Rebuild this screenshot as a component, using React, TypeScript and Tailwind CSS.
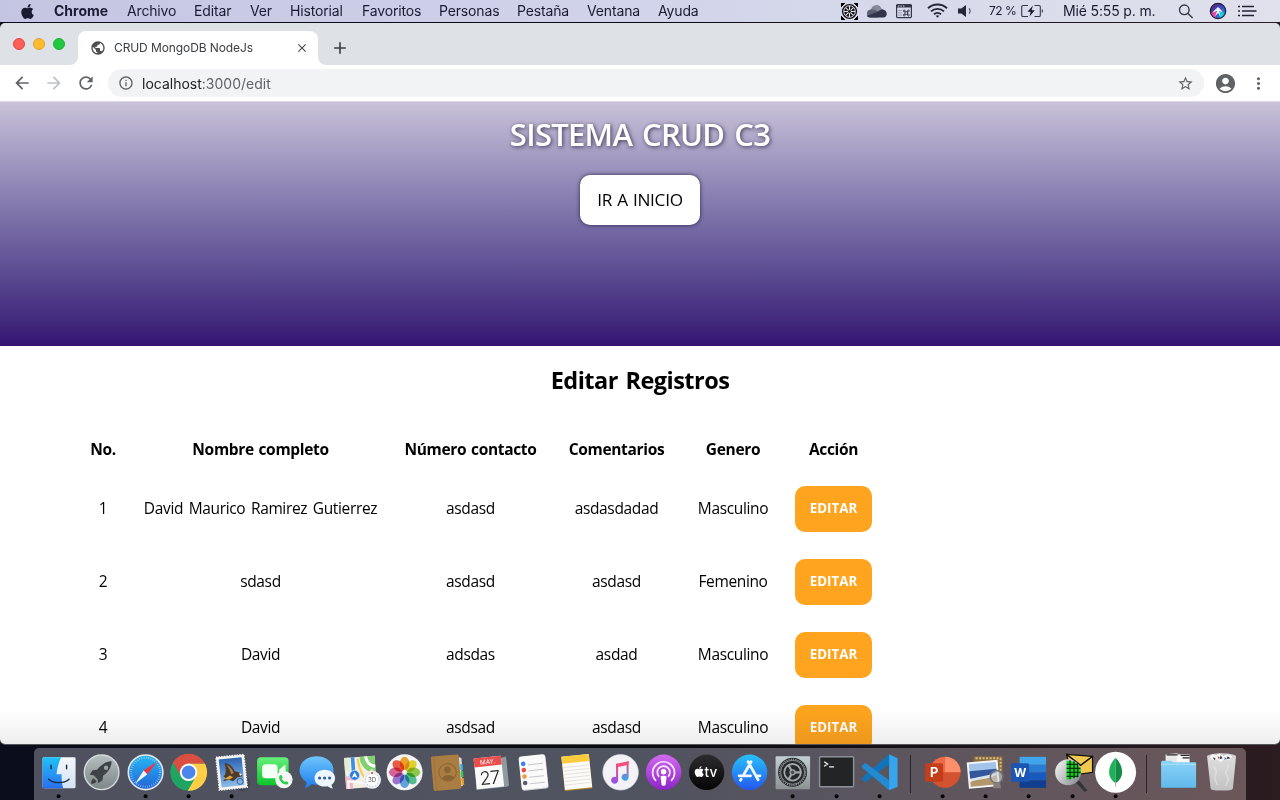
import React from "react";
import { FaApple } from "react-icons/fa";
import {
  MdAccountCircle,
  MdAdd,
  MdArrowBack,
  MdArrowForward,
  MdClose,
  MdInfoOutline,
  MdMoreVert,
  MdPublic,
  MdRefresh,
  MdStarBorder,
} from "react-icons/md";

const MENUS: [string, string][] = [
  ["Archivo", "w-[67px]"],
  ["Editar", "w-[56px]"],
  ["Ver", "w-[40px]"],
  ["Historial", "w-[72px]"],
  ["Favoritos", "w-[77px]"],
  ["Personas", "w-[78px]"],
  ["Pestaña", "w-[70px]"],
  ["Ventana", "w-[71px]"],
  ["Ayuda", "w-[50px]"],
];

const ROWS = [
  ["1", "David Maurico Ramirez Gutierrez", "asdasd", "asdasdadad", "Masculino"],
  ["2", "sdasd", "asdasd", "asdasd", "Femenino"],
  ["3", "David", "adsdas", "asdad", "Masculino"],
  ["4", "David", "asdsad", "asdasd", "Masculino"],
];

function MenuBar() {
  return (
    <header className="flex h-[22px] shrink-0 items-center bg-linear-to-r from-[#c4c5e2] via-[#d1d4ea] to-[#e0e1ec] font-['Inter',sans-serif] text-[14px] leading-[22px] tracking-[-0.15px] whitespace-nowrap text-[#1a1b30]">
      <FaApple className="ml-[19px] size-[17px] shrink-0" />
      <span className="ml-[18px] w-[73px] shrink-0 font-bold tracking-normal">Chrome</span>
      {MENUS.map(([name, width]) => (
        <span key={name} className={`shrink-0 ${width}`}>
          {name}
        </span>
      ))}
      <svg className="ml-[133px] size-[17px] shrink-0" viewBox="0 0 17 17">
        <path d="M0 0h4l-4 4zM17 0v4l-4-4zM0 17v-4l4 4zM17 17h-4l4-4z" fill="#000" stroke="#000" />
        <circle cx="8.5" cy="8.5" r="7.6" fill="#111" />
        <circle cx="8.5" cy="8.5" r="5.8" fill="none" stroke="#d8dae8" strokeWidth="1" />
        <path d="M8.5 3v11M3 8.5h11M4.6 4.6l7.8 7.8M12.4 4.6l-7.8 7.8" stroke="#e8e8f0" strokeWidth="1.1" />
        <circle cx="8.5" cy="8.5" r="1.4" fill="#111" />
      </svg>
      <svg className="ml-[8px] h-[14px] w-[21px] shrink-0" viewBox="0 0 21 14">
        <path d="M5 6a5.4 5.4 0 0 1 10.4-1.5L18 6l-6 5z" fill="#85889b" />
        <path d="M4.5 5.5C6 5 8 5.2 9.2 6.1L16 10l-4 3.4H4.2A4 4 0 0 1 4.5 5.5z" fill="#5d6072" />
        <path d="M10 8.6l4-2.4c3-1.6 6.8.3 6.8 3.6 0 2.3-1.600 3.700-3.500 3.700H4.200c-1.500 0-2.800-.8-3.400-1.800z" fill="#31334a" />
      </svg>
      <svg className="ml-[9px] size-[16px] shrink-0" viewBox="0 0 16 16">
        <rect x=".6" y="1.600" width="14.800" height="13" rx="1" fill="none" stroke="#34374b" strokeWidth="1.200" />
        <path d="M.5 3.200h15" stroke="#34374b" strokeWidth="2.600" />
        <path d="M2 3h1.300M4.500 3h1.300M7 3h1.300" stroke="#e0e2ee" />
        <path d="M3 7v6M5 7v6" stroke="#666a80" strokeDasharray="1 1.300" />
        <g fill="none" stroke="#34374b" strokeWidth=".9">
          <rect x="9" y="8.700" width="2.600" height="2.600" />
          <circle cx="8.200" cy="7.900" r=".9" />
          <circle cx="12.400" cy="7.900" r=".9" />
          <circle cx="8.200" cy="12.100" r=".9" />
          <circle cx="12.400" cy="12.100" r=".9" />
        </g>
      </svg>
      <svg className="ml-[15px] h-[16px] w-[21px] shrink-0" viewBox="0 0 21 16" fill="none" stroke="#24263b" strokeWidth="1.900">
        <path d="M1 5.300c5.400-5 13.600-5 19 0M4 8.400c3.700-3.400 9.300-3.400 13 0M7 11.300c2-1.900 5-1.900 7 0" />
        <path d="M8.700 12.800c1-.8 2.600-.8 3.600 0l-1.800 2z" fill="#24263b" stroke="none" />
      </svg>
      <svg className="ml-[10px] h-[14px] w-[14px] shrink-0" viewBox="0 0 14 14">
        <path d="M0 4.500h3.300L8 1v12L3.300 9.500H0z" fill="#24263b" />
        <path d="M11 4.300c1.300 1.500 1.300 3.900 0 5.400" fill="none" stroke="#5a5d70" strokeWidth="1.200" />
      </svg>
      <span className="ml-[17px] w-[32px] shrink-0 text-[12px] tracking-[-0.5px]">72 %</span>
      <svg className="h-[14px] w-[23px] shrink-0" viewBox="0 0 23 14">
        <path d="M7 1.500H2A1.300 1.300 0 0 0 .7 2.800v8.400A1.300 1.300 0 0 0 2 12.500h5M13.500 1.500H18a1.300 1.300 0 0 1 1.300 1.300v8.400a1.300 1.300 0 0 1-1.300 1.300h-4.500" fill="none" stroke="#34374b" strokeWidth="1.100" />
        <path d="M20.800 5c1.600.6 1.600 3.400 0 4z" fill="#34374b" />
        <path d="M12 1.500L6.500 7.800h3.200L8.500 12.500 13.800 6.200h-3.300z" fill="#15172a" />
      </svg>
      <span className="ml-[19px] w-[115px] shrink-0">Mié 5:55 p. m.</span>
      <svg className="size-[16px] shrink-0" viewBox="0 0 16 16" fill="none" stroke="#34374b" strokeWidth="1.400">
        <circle cx="6.300" cy="6.800" r="4.800" />
        <path d="M10 10.500l4.600 4.600" />
      </svg>
      <svg className="ml-[15px] size-[18px] shrink-0" viewBox="0 0 18 18">
        <defs>
          <linearGradient id="siri" x1="0" y1="0" x2="1" y2="1">
            <stop offset="0" stopColor="#5b1f63" />
            <stop offset=".5" stopColor="#3d46c8" />
            <stop offset="1" stopColor="#18b6d8" />
          </linearGradient>
        </defs>
        <circle cx="9" cy="9" r="7.700" fill="url(#siri)" stroke="#1f2038" strokeWidth="1.200" />
        <path d="M8 10C5 8.500 3 9.500 2.500 11.500 3.500 14 5 15 6.500 15.500z" fill="#e3479b" />
        <path d="M9.500 9.500C12 8 14.500 9.500 15 12c-1 2-2.500 3-4 3.600z" fill="#25c5df" />
        <path d="M9 5c1.500 1.500 3.500 2.500 4.500 5L10 9l1.500 5.500L9 11l-3 3.500L8 9l-4 1.500C5 8 7.500 7 9 5z" fill="#eaf2ff" />
      </svg>
      <svg className="ml-[11px] h-[12px] w-[19px] shrink-0" viewBox="0 0 19 12" stroke="#202236" strokeWidth="1.600">
        <path d="M0 1.500h2M0 6h2M0 10.500h2M4 1.500h12M4 6h14.500M4 10.500h12" />
      </svg>
    </header>
  );
}

function BrowserChrome() {
  return (
    <>
      <div className="flex h-[42px] shrink-0 bg-[#dee1e6]">
        <div className="flex w-[70px] items-start gap-[8px] pt-[15px] pl-[13px]">
          <span className="size-[12px] rounded-full border border-[#e2463f] bg-[#fe5f57]" />
          <span className="size-[12px] rounded-full border border-[#e1a12d] bg-[#febc2e]" />
          <span className="size-[12px] rounded-full border border-[#1fae35] bg-[#20c93f]" />
        </div>
        <div className="flex items-end">
          <svg className="size-[8px]" viewBox="0 0 8 8">
            <path d="M8 0v8H0a8 8 0 0 0 8-8z" fill="#fff" />
          </svg>
          <div className="flex h-[34px] w-[240px] items-center rounded-t-[8px] bg-white pl-[12px]">
            <MdPublic className="size-[16px] text-[#4b4e52]" />
            <span className="ml-[8px] w-[178px] font-['Inter',sans-serif] text-[12px] tracking-[-0.1px] text-[#3c4043]">
              CRUD MongoDB NodeJs
            </span>
            <MdClose className="ml-[3px] size-[14px] text-[#4b4e52]" />
          </div>
          <svg className="size-[8px]" viewBox="0 0 8 8">
            <path d="M0 0v8h8a8 8 0 0 1-8-8z" fill="#fff" />
          </svg>
        </div>
        <MdAdd className="mt-[15px] ml-[4px] size-[20px] text-[#3c4043]" />
      </div>
      <div className="flex h-[37px] shrink-0 items-center border-b border-[#dcdae2] bg-white text-[#5f6368]">
        <MdArrowBack className="ml-[12px] size-[20px]" />
        <MdArrowForward className="ml-[12px] size-[20px] text-[#bdc1c6]" />
        <MdRefresh className="ml-[12px] size-[20px]" />
        <div className="ml-[12px] flex h-[28px] w-[1096px] items-center rounded-full bg-[#f1f3f4] pr-[10px] pl-[10px]">
          <MdInfoOutline className="size-[16px]" />
          <span className="ml-[8px] flex-1 font-['Inter',sans-serif] text-[14px]">
            <span className="text-[#202124]">localhost</span>:3000/edit
          </span>
          <MdStarBorder className="size-[17px]" />
        </div>
        <MdAccountCircle className="ml-[10px] size-[23px]" />
        <MdMoreVert className="ml-[12px] size-[19px]" />
      </div>
    </>
  );
}

function Page() {
  return (
    <main className="flex min-h-0 flex-1 flex-col overflow-hidden bg-white font-['Open_Sans',sans-serif]">
      <section className="flex h-[244px] shrink-0 flex-col items-center bg-linear-to-b from-[#c9c2d8] to-[#351471]">
        <h1 className="mt-[11px] h-[42px] text-[31px] leading-[42px] font-[620] tracking-[-0.720px] text-white [text-shadow:1px_1px_4px_#3c3350] [word-spacing:2.500px]">
          SISTEMA CRUD C3
        </h1>
        <button className="mt-[20px] h-[50px] w-[120px] rounded-[10px] bg-white text-[17.200px] font-[450] tracking-[-0.3px] text-black shadow-[0_0_4px_rgba(20,10,40,0.75)] [word-spacing:1px]">
          IR A INICIO
        </button>
      </section>
      <h2 className="mt-[18px] h-[32px] shrink-0 text-center text-[23.500px] leading-[32px] font-[680] tracking-[-0.520px] text-black [word-spacing:2px]">
        Editar Registros
      </h2>
      <div className="mt-[40px] ml-[91px] grid shrink-0 grid-cols-[24px_237px_129px_109px_70px_77px] gap-x-[27px] text-center text-[15.500px] whitespace-nowrap text-black">
        {["No.", "Nombre completo", "Número contacto", "Comentarios", "Genero", "Acción"].map((h) => (
          <div key={h} className="flex h-[36px] items-start justify-center leading-[26px] font-[670] tracking-[-0.330px] [word-spacing:1px]">
            {h}
          </div>
        ))}
        {ROWS.map((row) => (
          <React.Fragment key={row[0]}>
            {row.map((cell, i) => (
              <div key={i} className="flex h-[73px] items-center justify-center font-[440] tracking-[-0.360px] [word-spacing:2px]">
                {cell}
              </div>
            ))}
            <div className="flex h-[73px] items-center">
              <button className="h-[46px] w-[77px] rounded-[10px] bg-[#fea41e] text-[13.300px] font-bold text-white">
                EDITAR
              </button>
            </div>
          </React.Fragment>
        ))}
      </div>
    </main>
  );
}

type DockItem = { name: string; running?: boolean; art: React.ReactNode };

const uiFont = "Inter, sans-serif";

function Gradient({ id, from, to, x2 = 0, y2 = 1 }: { id: string; from: string; to: string; x2?: number; y2?: number }) {
  return (
    <linearGradient id={id} x1="0" y1="0" x2={x2} y2={y2}>
      <stop offset="0" stopColor={from} />
      <stop offset="1" stopColor={to} />
    </linearGradient>
  );
}

const APPS: DockItem[] = [
  {
    name: "Finder",
    running: true,
    art: (
      <>
        <Gradient id="finderL" from="#1fc3f7" to="#2a6ff2" />
        <Gradient id="finderR" from="#f4f7fb" to="#d4e3f5" />
        <rect x="-16" y="-15" width="33" height="31" rx="1.500" fill="url(#finderR)" />
        <path d="M-14.500-15H2.500C0-9-1.500-4-2 2h5c0 5 .3 9 1.500 14h-19A1.500 1.500 0 0 1-16 14.500v-28A1.500 1.500 0 0 1-14.500-15z" fill="url(#finderL)" />
        <path d="M-7.500-7v3.500M8-7v3.500M-10 7C-5 11.500 5.500 11.500 10.500 7" fill="none" stroke="#16283c" strokeWidth="1.400" strokeLinecap="round" />
      </>
    ),
  },
  {
    name: "Launchpad",
    art: (
      <>
        <Gradient id="launch" from="#b5bfbf" to="#7d8688" />
        <circle r="17.300" fill="url(#launch)" stroke="#d5dadb" strokeWidth="1.400" />
        <path d="M10-11C4-11-1-7-4.500-2.500L-9-2l-3 4.500 4 .5 4 4L-3.500 11 1 8l.5-4.500C6.500 0 10-5 10-11z" fill="#3d4347" />
        <circle cx="4.500" cy="-4.500" r="2.200" fill="#9aa3a5" />
        <path d="M-8 6c-2 1-2.500 3-2.500 5.500C-8 11.500-6 11-5 9z" fill="#3d4347" />
      </>
    ),
  },
  {
    name: "Safari",
    running: true,
    art: (
      <>
        <Gradient id="safari" from="#27b8f2" to="#2262d8" />
        <circle r="17.300" fill="url(#safari)" stroke="#e4e7ec" strokeWidth="1.600" />
        <circle r="14.500" fill="none" stroke="#a9dcf8" strokeWidth="2" strokeDasharray=".6 1.678" />
        <path d="M11.500-10.500L1.800 2-2-1.800z" fill="#f0363c" />
        <path d="M-10.500 11.500L-2-1.800 1.800 2z" fill="#f3f3f3" />
      </>
    ),
  },
  {
    name: "Chrome",
    running: true,
    art: (
      <>
        <clipPath id="chromeClip">
          <circle r="18.500" />
        </clipPath>
        <g clipPath="url(#chromeClip)">
          <circle r="18.500" fill="#1fa463" />
          <path d="M0-8.500H30V-30H-30L-27.500-30.300-7.400 4.200 0 0z" fill="#dc4e41" />
          <path d="M0-8.500H30V30L-12.500 39 7.400 4.200 0 0z" fill="#ffce44" />
        </g>
        <circle r="8.700" fill="#fff" />
        <circle r="6.800" fill="#4a86ee" />
      </>
    ),
  },
  {
    name: "Mail",
    running: true,
    art: (
      <>
        <Gradient id="mail" from="#2d64b2" to="#8cbce8" />
        <circle cx="11" cy="11" r="7" fill="#474a58" stroke="#3d404d" />
        <g transform="rotate(-6)">
          <rect x="-14" y="-16.500" width="28" height="33" fill="#f4f4f2" stroke="#f4f4f2" strokeWidth="1.500" strokeDasharray="1.500 1.100" />
          <rect x="-11.500" y="-14" width="23" height="28" fill="url(#mail)" />
          <path d="M-6-10C-1-9 2-5 3-1l5 2 2.500 4-5 .5-5 3.500-4-2-6 1 3-3-2-2c3-1 3.500-7 2.500-13z" fill="#4f3a28" />
          <path d="M-4.500-8C-1-6 1.500-2 2 1l-2.500 1C-1-2-2.500-5-4.500-8z" fill="#a5825a" />
          <path d="M-8 6l6-3 3 2-4 2z" fill="#d8a83c" />
          <path d="M7.500 1.500l2.500 1.500-2 1.500z" fill="#fff" />
          <circle cx="7.500" cy="10" r="3" fill="none" stroke="#31517f" strokeWidth=".8" />
        </g>
      </>
    ),
  },
  {
    name: "FaceTime",
    art: (
      <>
        <Gradient id="facetime" from="#66f07a" to="#0ac42c" />
        <rect x="-17.500" y="-15" width="31.500" height="28" rx="4" fill="url(#facetime)" />
        <rect x="-12.500" y="-8" width="15.500" height="14" rx="3.500" fill="#f4fff5" />
        <path d="M4.500-2.500L9.500-7c.7-.6 1.500-.2 1.500.6V6L4.500 1.500z" fill="#e9fbea" />
        <circle cx="9.300" cy="7.300" r="8.700" fill="#f4f5f4" />
        <path d="M5 3.500c1-1.300 2-1 2.600.3.500 1 .5 1.500-.4 2.200.5 1.700 1.700 3 3.300 3.600.8-1 1.400-.9 2.300-.2 1.200.8 1.400 1.600.3 2.500C9.500 14 2.700 7.500 5 3.500z" fill="#2ccf4a" />
      </>
    ),
  },
  {
    name: "Messages",
    art: (
      <>
        <Gradient id="msg" from="#6ec5fb" to="#1d7df0" />
        <path d="M-1-16c9.500 0 17 6 17 14S8.500 12.500-1 12.500c-2 0-3.500-.2-5-.7-2 2.200-4 3.700-7 4 1.500-2 2-3.500 2-6C-15.500 7-18 2.500-18-2c0-8 7.500-14 17-14z" fill="url(#msg)" />
        <path d="M7-2.500c6.500 0 10.500 4 10.500 8.500 0 3-1.500 5-3.500 6.500 0 1.500.5 2.500 1.500 3.700-2 0-4-1-5.500-2.200-7 1.300-13-2-13-8 0-4.500 4-8.500 10-8.500z" fill="#edf5fd" />
        <g fill="#2a5fa8">
          <circle cx="2" cy="5.700" r="1.600" />
          <circle cx="7" cy="5.700" r="1.600" />
          <circle cx="12" cy="5.700" r="1.600" />
        </g>
      </>
    ),
  },
  {
    name: "Maps",
    art: (
      <>
        <g transform="rotate(-4)">
          <rect x="-16.500" y="-15.500" width="30.500" height="31" fill="#f3efe4" />
          <path d="M-1-15.500h15V2C5 0-1-6-1-15.500z" fill="#7fd070" />
          <path d="M5-15.500C6-9 9-6 14-5" fill="none" stroke="#fff" strokeWidth="3" />
          <path d="M-16.500-15.500h5V-2h-5z" fill="#dfeed5" />
          <path d="M-16.500 3h7v12.500h-7z" fill="#f2b9c4" />
          <path d="M-14 15.500V8L14 13" fill="none" stroke="#fff" strokeWidth="2" />
          <path d="M0 9l10-12 4 4v7z" fill="#cfe9b8" />
          <path d="M-8-15.500V3" stroke="#3a8ee8" strokeWidth="3.600" />
          <path d="M-3-14C-2 0 2 8 12 14" fill="none" stroke="#f7ce4c" strokeWidth="2" />
        </g>
        <circle cx="-7" cy="3" r="5" fill="#2c7be0" stroke="#d7e6f8" strokeWidth=".8" />
        <path d="M-7-.3l3 6-3-1.400-3 1.400z" fill="#fff" />
        <circle cx="10.500" cy="7.500" r="9" fill="#eef0f2" />
        <circle cx="10.500" cy="7.500" r="6.600" fill="#fff" stroke="#8aa" strokeWidth=".8" strokeDasharray="1 2" />
        <text x="10.500" y="9.800" textAnchor="middle" fontSize="6.200" fontFamily={uiFont} fill="#555">3D</text>
        <circle cx="10.500" cy="0.800" r="1" fill="#e33" />
      </>
    ),
  },
  {
    name: "Photos",
    art: (
      <>
        <circle r="18" fill="#f4f4f6" />
        {["#f7a11b", "#e8d81c", "#8ecb3c", "#47bf8a", "#5a9fe0", "#9a6ccf", "#dd5b94", "#f0503a"].map((color, i) => (
          <ellipse key={color} cy="-8.900" rx="4.800" ry="6.700" fill={color} opacity=".92" transform={`rotate(${i * 45})`} className="mix-blend-multiply" />
        ))}
      </>
    ),
  },
  {
    name: "Contacts",
    art: (
      <g transform="rotate(-5)">
        <path d="M11-14h3v29h-3z" fill="#ddd" />
        <path d="M13-13h2v6h-2z" fill="#ddd" />
        <path d="M13-7h2.500v6H13z" fill="#3fb5e8" />
        <path d="M13 0h2.500v6H13z" fill="#3cc44e" />
        <path d="M13 7h2.500v7H13z" fill="#f09a28" />
        <rect x="-15.500" y="-17" width="28" height="34.500" rx="1.500" fill="#aa7d42" />
        <path d="M-12.500-17v34.500" stroke="#9f743b" />
        <circle r="8.700" fill="none" stroke="#8a6533" strokeWidth="1" />
        <circle cy="-2.500" r="3.200" fill="#8a6533" />
        <path d="M-6 6c1-4.500 11-4.500 12 0-3 3.500-9 3.500-12 0z" fill="#8a6533" />
      </g>
    ),
  },
  {
    name: "Calendar",
    art: (
      <g transform="rotate(-6)">
        <path d="M-14-9l-2 25h31l2-1V-14z" fill="#8d9ba0" />
        <rect x="-15.500" y="-15.500" width="27.500" height="31" rx="1" fill="#fafafa" />
        <path d="M-15.500-15.500H12v9h-27.500z" fill="#ea4d4b" />
        <text x="-1.700" y="-8.600" textAnchor="middle" fontSize="6.300" fontFamily={uiFont} fill="#fff">MAY.</text>
        <text x="-1.700" y="11.800" textAnchor="middle" fontSize="18.500" letterSpacing="-1" fontWeight="300" fontFamily={uiFont} fill="#1c1c1c">27</text>
      </g>
    ),
  },
  {
    name: "Reminders",
    art: (
      <g transform="rotate(-6)">
        <rect x="-13" y="-16.500" width="26.500" height="34" rx="2.500" fill="#c6c8cc" />
        <rect x="-13.500" y="-17" width="26.500" height="33.500" rx="2.500" fill="#fafafa" />
        <g stroke="#b9bbc0" strokeWidth=".8">
          <path d="M-5-8h15M-5-2h15M-5 4.500h15M-5 11h15" />
        </g>
        <circle cx="-9.500" cy="-9.500" r="2.300" fill="#3b82f0" />
        <circle cx="-9.500" cy="-3.200" r="2.300" fill="#ee4b45" />
        <circle cx="-9.500" cy="3.300" r="2.300" fill="#f39a3c" />
        <circle cx="-9.500" cy="9.700" r="2.300" fill="#5b5e66" />
      </g>
    ),
  },
  {
    name: "Notes",
    art: (
      <g transform="rotate(-6)">
        <rect x="-13.500" y="-16.500" width="27.500" height="34" fill="#b58a24" />
        <rect x="-13.500" y="-17" width="27.500" height="33.500" fill="#fcfbf7" />
        <path d="M-13.500-17H14v7h-27.500z" fill="#fccc3d" />
        <path d="M-13-6h26M-13-2.500h26M-13 1h26M-13 4.500h26M-13 8h26M-13 11.500h26" stroke="#d9d9d6" strokeWidth=".7" />
      </g>
    ),
  },
  {
    name: "Music",
    art: (
      <>
        <Gradient id="music" from="#fb4b70" to="#8a54f5" />
        <Gradient id="music2" from="#fb4b70" to="#2fa8f7" />
        <circle r="17.800" fill="#f2f2f7" stroke="#d9d9e2" strokeWidth=".6" />
        <path d="M-4.500-8.500L8-11v3.500l-12.500 2.600z" fill="#f8507c" />
        <path d="M-4.500-8.500h2V8a3.500 3.500 0 1 1-2-3.200z" fill="url(#music)" />
        <path d="M6-10.500l2-.5V5a3.500 3.500 0 1 1-2-3.200z" fill="url(#music2)" />
      </>
    ),
  },
  {
    name: "Podcasts",
    art: (
      <>
        <Gradient id="pod" from="#d36af0" to="#8d25c9" />
        <circle r="17.700" fill="url(#pod)" />
        <g fill="none" stroke="#f7e9fc" strokeWidth="1.700">
          <path d="M-7.500 8.500a11 11 0 1 1 15 0" />
          <path d="M-4.500 4.500a6.300 6.300 0 1 1 9 0" />
        </g>
        <circle cy="-.5" r="2.700" fill="#fff" />
        <path d="M-3 4.500c1-1.300 5-1.300 6 0L2 12.500c-.5 1.300-3.500 1.300-4 0z" fill="#fff" />
      </>
    ),
  },
  {
    name: "TV",
    art: (
      <>
        <Gradient id="tv" from="#2c2c2e" to="#050505" />
        <circle r="17.700" fill="url(#tv)" />
        <g transform="translate(-12,-6.800) scale(.024)" fill="#fff">
          <path d="M318.700 268.700c-.2-36.700 16.400-64.400 50-84.800-18.800-26.900-47.200-41.700-84.700-44.600-35.500-2.800-74.300 20.700-88.500 20.700-15 0-49.400-19.700-76.400-19.700C63.300 141.200 4 184.800 4 273.500q0 39.300 14.400 81.200c12.800 36.700 59 126.700 107.200 125.200 25.200-.6 43-17.900 75.800-17.900 31.800 0 48.300 17.900 76.400 17.900 48.600-.7 90.400-82.500 102.600-119.300-65.200-30.700-61.700-90-61.700-91.900zm-56.600-164.200c27.300-32.400 24.800-61.900 24-72.500-24.100 1.400-52 16.400-67.900 34.900-17.500 19.800-27.800 44.300-25.600 71.900 26.100 2 49.900-11.400 69.500-34.300z" />
        </g>
        <text x="-2" y="4.500" fontSize="13.500" fontWeight="500" fontFamily={uiFont} fill="#fff">tv</text>
      </>
    ),
  },
  {
    name: "App Store",
    art: (
      <>
        <Gradient id="store" from="#27c1fb" to="#2457ef" />
        <circle r="17.700" fill="url(#store)" />
        <g fill="none" stroke="#f1f8ff" strokeWidth="2.800" strokeLinecap="round">
          <path d="M1.500-10.500L-6.500 3.500M-1.500-10.500L8.500 7.500M-10.500 3.500H1M6.500 3.500h4M-8.500 7l-.6 1" />
        </g>
      </>
    ),
  },
  {
    name: "Settings",
    running: true,
    art: (
      <>
        <Gradient id="settings" from="#c2cfd6" to="#8d9193" />
        <rect x="-17" y="-16" width="34.500" height="33" rx="1" fill="url(#settings)" />
        <circle r="14.500" fill="#26282a" />
        <circle r="13" fill="none" stroke="#8b9095" strokeWidth="1.500" strokeDasharray="1.200 1.069" />
        <circle r="12" fill="none" stroke="#8b9095" strokeWidth="1" />
        <circle r="8.300" fill="none" stroke="#a1a6aa" strokeWidth="1.800" />
        <path d="M0 0h9M0 0L-4.500-7.800M0 0L-4.500 7.800" stroke="#a1a6aa" strokeWidth="2.200" />
        <circle r="2.500" fill="#4a4d50" stroke="#a1a6aa" strokeWidth="1.300" />
      </>
    ),
  },
  {
    name: "Terminal",
    running: true,
    art: (
      <>
        <rect x="-17" y="-15.500" width="34" height="30" rx="1" fill="#222426" stroke="#8b9298" strokeWidth="1.400" />
        <path d="M-12.500-10.500l3.500 2.200-3.500 2.200M-7.500-5.500h5" fill="none" stroke="#f0f0f0" strokeWidth="1.300" />
      </>
    ),
  },
  {
    name: "Code",
    running: true,
    art: (
      <>
        <path d="M9.500-18L18-14V14.500L9.500 18z" fill="#36a5ee" />
        <path d="M9.500-18v10L-13 9.300c-.8.500-1.700.5-2.300 0L-17.200 7.500c-.7-.7-.7-1.600 0-2.300z" fill="#1373b8" />
        <path d="M9.500 18V8L-13-8.500c-.8-.5-1.700-.5-2.300 0l-1.900 1.700c-.7.700-.7 1.600 0 2.300z" fill="#2389d0" />
      </>
    ),
  },
];

const DOCUMENT_APPS: DockItem[] = [
  {
    name: "PowerPoint",
    running: true,
    art: (
      <>
        <circle cx="2.500" r="15.500" fill="#d35230" />
        <path d="M2.500 0v-15.500A15.500 15.500 0 0 1 18 0z" fill="#ff8f6b" />
        <path d="M2.500 0v-15.500A15.500 15.500 0 0 0-13 0z" fill="#ed6c47" />
        <rect x="-17.500" y="-9" width="18" height="18.500" rx="1.500" fill="#c43e1c" />
        <text x="-8.500" y="4.800" textAnchor="middle" fontSize="13" fontWeight="700" fontFamily={uiFont} fill="#fff">P</text>
      </>
    ),
  },
  {
    name: "Preview",
    running: true,
    art: (
      <>
        <path d="M-12-16h29v25h-29z" fill="#8a6a3c" />
        <path d="M-10-14h25M15-14V0" fill="none" stroke="#d8bf8c" strokeWidth="2" strokeDasharray="2 1.500" />
        <g transform="rotate(-5)">
          <rect x="-18" y="-11.500" width="31" height="26.500" fill="#f5f5f5" />
          <path d="M-16-9.500h27v10h-27z" fill="#a3c4ea" />
          <path d="M-16-2.500h27v7.500h-27z" fill="#33569c" />
          <path d="M-16 6c7-3 15-1 27-5v12h-27z" fill="#d8e6ec" />
          <path d="M-16 8.500c7-3 15 0 27-5v9.500h-27z" fill="#b3966a" />
        </g>
        <circle cx="11" cy="4.500" r="6.300" fill="#c7d2de" fillOpacity=".55" stroke="#6d7277" strokeWidth="1.600" />
        <path d="M8 10.500h6.500l1 5.500h-8z" fill="#85807b" />
      </>
    ),
  },
  {
    name: "Word",
    running: true,
    art: (
      <>
        <path d="M-9-15.500h26.500v8H-9z" fill="#41a5ee" />
        <path d="M-9-7.500h26.500V.2H-9z" fill="#2b7cd3" />
        <path d="M-9 .2h26.500V8H-9z" fill="#185abd" />
        <path d="M-9 8h26.500v7.500H-9z" fill="#103f91" />
        <rect x="-17.500" y="-9" width="18" height="18.500" rx="1.500" fill="#1b56b5" />
        <text x="-8.500" y="4.500" textAnchor="middle" fontSize="12" fontWeight="700" fontFamily={uiFont} fill="#fff">W</text>
      </>
    ),
  },
  {
    name: "Mail viewer",
    running: true,
    art: (
      <>
        <Gradient id="lens" from="#fafafa" to="#8f9496" x2={1} y2={0.6} />
        <path d="M-6-18l26 2v16L-1 3z" fill="#f2c94f" stroke="#111" strokeWidth="1.300" />
        <path d="M-6-18L8-7 20-16" fill="none" stroke="#111" strokeWidth="1.500" />
        <path d="M3 10l9 9.500 3-1-8-10z" fill="#333638" />
        <circle cx="-4.500" cy="0" r="13" fill="url(#lens)" />
        <path d="M-6-11.500C1-12 7.500-8 8 0 7 4-1 7-6 7.500z" fill="#17d02c" />
        <path d="M-2.500-12V7M1.500-11V6M5-9V5M-6-8H5M-6-4H8M-6 0H8M-6 4H6" stroke="#063a0b" strokeWidth="1.300" />
      </>
    ),
  },
  {
    name: "Compass",
    running: true,
    art: (
      <>
        <circle r="20.500" fill="#fff" />
        <path d="M0-14.500C-4.500-10-6.500-5-6.500 0-6.500 5-3.500 8.500 0 11z" fill="#1fb05b" />
        <path d="M0-14.500C4.500-10 6.500-5 6.500 0 6.500 5 3.500 8.500 0 11z" fill="#128b45" />
        <path d="M0 10v4.500" stroke="#a9b5ac" strokeWidth="1" />
      </>
    ),
  },
];

const PLACES: DockItem[] = [
  {
    name: "Documents",
    art: (
      <>
        <Gradient id="folder" from="#8bd2f7" to="#60b9ec" />
        <path d="M-13-18l12-1v12h-12z" fill="#e8e8e8" />
        <path d="M-2-18h13v13H-2z" fill="#f7f7f7" />
        <path d="M-12-17.500h11M2-17h9M4-14.500h7" stroke="#222" strokeWidth="1.200" />
        <path d="M-17.500-9.500c0-1.500.5-2 2-2h8l2 1.500h22c.7 0 1 .3 1 1V14.500c0 .7-.3 1-1 1h-33c-.7 0-1-.3-1-1z" fill="url(#folder)" />
        <path d="M-17.500-8h35" stroke="#a9e0fa" />
      </>
    ),
  },
  {
    name: "Trash",
    art: (
      <>
        <Gradient id="trash" from="#dedede" to="#c2c1c2" />
        <path d="M-14.500-16L-11 16c.3 1.500 2 2.300 11 2.300S11 17.500 11.300 16L14.500-16z" fill="url(#trash)" />
        <ellipse cy="-16" rx="14.500" ry="3" fill="#cfcfd1" />
        <path d="M-12-15l3-3 4 1 3-2 4 3 4-2 5 2-3 4-5-1-4 3-4-3-4 1z" fill="#f5f5f5" />
        <path d="M-9-15l3 1-1 2zM-1-17l2 3-3 1zM6-16l3 2-4 1z" fill="#3b3e46" />
        <path d="M-4-16l2 1-1 2z" fill="#c43b3b" />
        <path d="M3-15l2 1-2 2z" fill="#3f74c9" />
        <path d="M-8-6l3 5-2 7 3 7M7-7L4 1l3 6-3 7" fill="none" stroke="#f0f0f0" strokeOpacity=".5" strokeWidth="1.500" />
      </>
    ),
  },
];

function DockGroup({ items }: { items: DockItem[] }) {
  return (
    <div className="flex">
      {items.map((item) => (
        <svg key={item.name} className="h-[52px] w-[43.2px] shrink-0 overflow-visible" viewBox="-21.600 -24.300 43.200 52">
          {item.art}
          {item.running && <circle cy="24" r="2" fill="#050507" />}
        </svg>
      ))}
    </div>
  );
}

function Separator() {
  return <div className="mx-[9.500px] mt-[7px] h-[38px] w-px shrink-0 bg-[#26262c]" />;
}

function Dock() {
  return (
    <footer className="mt-[4px] ml-[34px] flex h-[52px] w-[1212px] shrink-0 rounded-t-[5px] bg-linear-to-r from-[#4f515f] via-[#505360] to-[#6b575a] pl-[3.200px]">
      <DockGroup items={APPS} />
      <Separator />
      <DockGroup items={DOCUMENT_APPS} />
      <Separator />
      <DockGroup items={PLACES} />
    </footer>
  );
}

export default function App() {
  return (
    <div className="flex h-[800px] w-[1280px] flex-col overflow-hidden bg-linear-to-r from-[#0b0d1c] via-[#0a0a10] to-[#2b1c20]">
      <MenuBar />
      <div className="relative mt-px flex h-[721px] shrink-0 flex-col overflow-hidden rounded-[5px] shadow-[0_1px_0_#55565a]">
        <BrowserChrome />
        <Page />
        <div className="pointer-events-none absolute inset-x-0 bottom-0 h-[34px] bg-linear-to-b from-transparent to-black/7" />
      </div>
      <Dock />
    </div>
  );
}
